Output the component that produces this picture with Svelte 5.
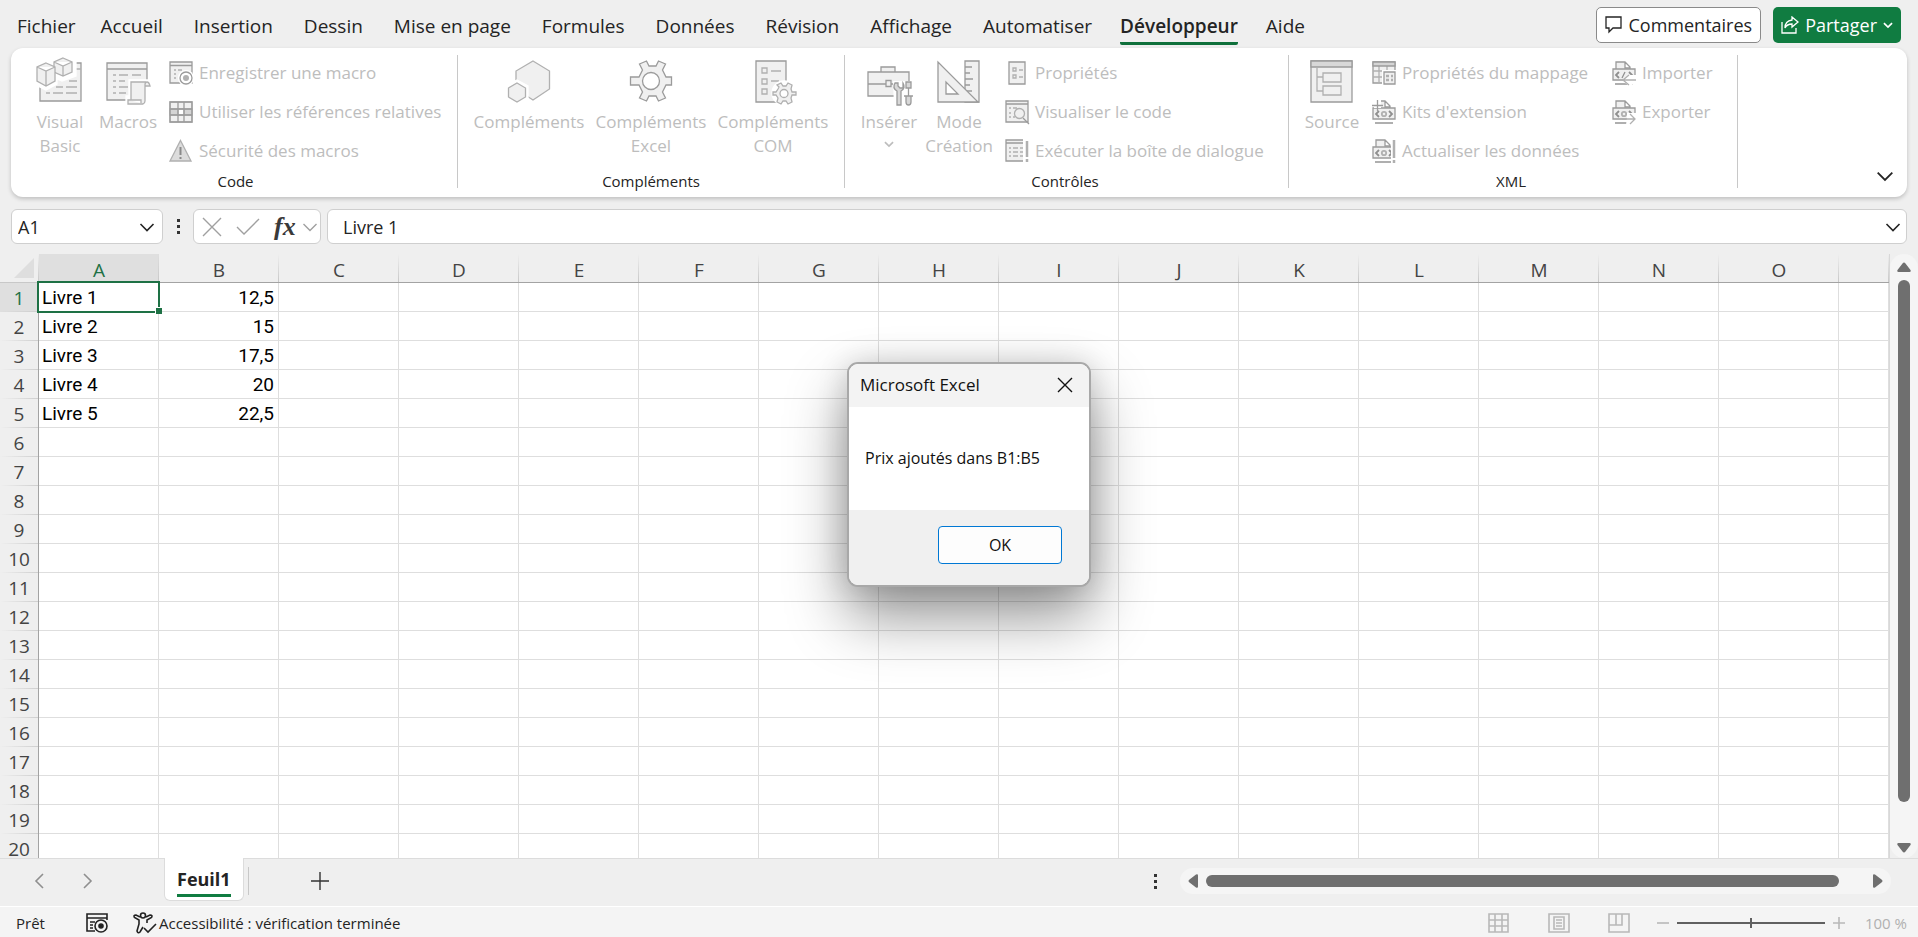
<script lang="ts">
  const tabs = ['Fichier', 'Accueil', 'Insertion', 'Dessin', 'Mise en page', 'Formules', 'Données', 'Révision', 'Affichage', 'Automatiser', 'Développeur', 'Aide'];
  const columns = 'ABCDEFGHIJKLMNO'.split('');
  const rows = Array.from({ length: 20 }, (_, i) => i + 1);
  const data: Record<number, string[]> = {
    1: ['Livre 1', '12,5'],
    2: ['Livre 2', '15'],
    3: ['Livre 3', '17,5'],
    4: ['Livre 4', '20'],
    5: ['Livre 5', '22,5'],
  };

  let activeTab = $state('Développeur');
  let cellName = $state('A1');
  let formula = $state('Livre 1');
  let zoom = $state(50);
  let showDialog = $state(true);
</script>

{#snippet chevron(size: number)}
  <svg width={size} height={size} viewBox="0 0 16 16" fill="none" stroke="currentColor" stroke-width={size < 12 ? 2.6 : 1.6}><path d="M1.500 5 8 11.500 14.500 5" /></svg>
{/snippet}

{#snippet icon(name: string)}
  {#if name === 'vb'}
    <svg class="big" viewBox="0 0 48 48">
      <path d="M4 5h41v38H4z" fill="#f0f0f0" stroke="#9b9b9b" />
      <path d="M30 11h15M33 23h8M20 29h7M30 29h11M10 35h4M17 35h10M30 35h11" />
      <path d="M0 5 10 1l8 3 8-5 14 5v14L26 23l-5-2v5L10 32 0 27z" fill="#fff" stroke="#fff" />
      <path d="m27 0 9 4v10l-9 4-9-4V4zM18 4l9 4 9-4M27 8v10" fill="#f0f0f0" />
      <path d="m10 5 9 4v14l-9 5-9-5V9zM1 9l9 4 9-4M10 13v15" fill="#f0f0f0" />
    </svg>
  {:else if name === 'macros'}
    <svg class="big" viewBox="0 0 48 48">
      <path d="M3 5h40v37H3z" fill="#f0f0f0" stroke="#9b9b9b" />
      <path d="M3 11h40" stroke="#9b9b9b" />
      <path d="M9 17h3M15 17h9M28 17h9M9 23h3M15 23h6M9 29h3M15 29h9M9 35h3M15 35h7" />
      <path d="M25 22h20q4 1 4 8h-4v16H22v-8h3z" fill="#fff" stroke="#fff" />
      <path d="M42 24h-15v18h-3v4h15q2-1 2-3V27q0-3 2-3t3 4h-5M24 42h13v3" fill="#f0f0f0" />
    </svg>
  {:else if name === 'hex'}
    <svg class="big" viewBox="0 0 48 48">
      <path d="m28 3 16.500 10v18L28 42 11 31V13z" fill="#f0f0f0" />
      <path d="m12 22 11 6v13l-11 6-11-6V28z" fill="#fff" stroke="#fff" />
      <path d="m12 25 8.500 5v9L12 44l-8.500-5v-9z" fill="#f0f0f0" />
    </svg>
  {:else if name === 'gear'}
    <svg class="big" viewBox="0 0 48 48">
      <path d="M17 10 14 4l7-3 2.500 5h7L33 1l7 3-3 6 3.500 7H46v8h-5.500L37 32l3 6-7 3-2.500-5h-7L21 41l-7-3 3-6-3.500-7H5v-8h8.500z" transform="translate(-1.500 2)" fill="#f0f0f0" stroke="#9b9b9b" />
      <circle cx="24" cy="23" r="8.500" fill="#fff" stroke="#9b9b9b" />
    </svg>
  {:else if name === 'com'}
    <svg class="big" viewBox="0 0 48 48">
      <path d="M7 3h30v41H7z" fill="#f0f0f0" stroke="#9b9b9b" />
      <path d="M13 10h5v5h-5zM13 21h5v5h-5zM13 31h5v5h-5zM22 13h10M22 23h8" />
      <circle cx="35" cy="35" r="12" fill="#fff" stroke="#fff" />
      <path d="m30 29-2-2 4-2 2 3h3l2-3 4 2-1 4 1 3h4v3h-4l-1 3 1 4-4 2-2-3h-3l-2 3-4-2 1-4-2-3h-3v-3h3l2-3z" fill="#f0f0f0" />
      <circle cx="35" cy="35.500" r="4" fill="#fff" />
    </svg>
  {:else if name === 'toolbox'}
    <svg class="big" viewBox="0 0 48 48">
      <path d="M16 14v-5h14v5M3 14h41v24H3z" fill="#f0f0f0" stroke="#9b9b9b" />
      <path d="M3 26h41" stroke="#9b9b9b" />
      <path d="M28 23h21v26H29z" fill="#fff" stroke="none" />
      <path d="M21 22.500h5v6h-5z" fill="#f0f0f0" stroke="#9b9b9b" />
      <path d="M30 25q-3 5 2 8v14h4V33q5-3 2-8v5h-3l-2-2v-3zM41 24h5v6h-5zM43.500 30v8M39 38h9M41 38v6q0 3 2.500 3t2.500-3v-6" fill="#d8d8d8" stroke="#9b9b9b" />
    </svg>
  {:else if name === 'design'}
    <svg class="big" viewBox="0 0 48 48">
      <path d="M30 3h14v41H30z" fill="#f0f0f0" stroke="#9b9b9b" />
      <path d="M30 9h7M30 15h5M30 21h8M30 27h5M30 33h7" stroke="#9b9b9b" />
      <path d="M3 4v40h40z" fill="#f0f0f0" stroke="#9b9b9b" />
      <path d="M11 24v12h12z" fill="#fff" stroke="#9b9b9b" />
    </svg>
  {:else if name === 'source'}
    <svg class="big" viewBox="0 0 48 48">
      <path d="M3 3h41v41H3z" fill="#f0f0f0" stroke="#9b9b9b" />
      <path d="M3 3h41v6H3z" fill="#d8d8d8" stroke="#9b9b9b" />
      <path d="M9 9v24h6M9 19h6M15 15h18v9H15zM15 28h18v9H15z" />
    </svg>
  {:else}
    <svg class="small" viewBox="0 0 24 24">
      {#if name === 'record'}
        <path d="M1 1h22v21H1zM1 4.500h22" fill="#f0f0f0" stroke="#9b9b9b" />
        <path d="M5 9h2M9 9h4M5 13h2M5 17h2" />
        <circle cx="17" cy="17" r="8" fill="#fff" stroke="none" />
        <circle cx="17" cy="17" r="6" fill="#fff" stroke="#9b9b9b" />
        <circle cx="17" cy="17" r="3" fill="#b0b0b0" stroke="none" />
      {:else if name === 'relative'}
        <path d="M1 2h22v20H1z" fill="#f0f0f0" />
        <path d="M1 9h22v6H1z" fill="#d4d4d4" />
        <path d="M9 9h6v6H9z" fill="#fff" />
        <path d="M1 2h22v20H1zM9 2v20M15 2v20M1 9h22M1 15h22" stroke="#9b9b9b" />
      {:else if name === 'warning'}
        <path d="M11.500 1.500 22 22H1z" fill="#dcdcdc" />
        <path d="M11.500 8v8M11.500 18v2" stroke="#8a8a8a" stroke-width="2" />
      {:else if name === 'props'}
        <path d="M4 1h16v22H4z" fill="#f0f0f0" stroke="#9b9b9b" />
        <path d="M8 7h3v3H8zM8 14h3v3H8zM14 9h4M14 16h4" />
      {:else if name === 'view'}
        <path d="M1 1h22v21H1zM1 4h22" fill="#f0f0f0" stroke="#9b9b9b" />
        <path d="M4 8h2M8 8h4M4 13h2M4 17h2M8 17h2" />
        <path d="m18 18 6 6" stroke="#9b9b9b" />
        <circle cx="14.500" cy="13.500" r="5" fill="#f0f0f0" />
      {:else if name === 'run'}
        <path d="M18 1H1v21h17M1 4h17" fill="#f0f0f0" stroke="#9b9b9b" />
        <path d="M4 9h2M8 9h5M15 9h3M4 13h2M8 13h5M15 13h3M4 17h2M8 17h5M15 17h3" />
        <path d="M22 2v16M22 20v3" stroke-width="2.500" />
      {:else if name === 'map'}
        <path d="M1 1h22v21H1z" fill="#f0f0f0" stroke="#9b9b9b" />
        <path d="M1 10h22M1 16h22M7 5v17M15 5v17" />
        <path d="M1 1h22v4H1z" fill="#d4d4d4" stroke="#9b9b9b" />
        <path d="M10 9h15v16H10z" fill="#fff" stroke="none" />
        <path d="M12 11h11v12H12z" fill="#f0f0f0" stroke="#9b9b9b" />
        <path d="M14 15h3M19 15h2M14 19h3M19 19h2" stroke-width="2.500" />
      {:else}
        <path d="M4 8V1h9l5 5v2M13 1v6h5" fill="#f0f0f0" stroke="#9b9b9b" />
        <path d="M1 8h22v11H1z" fill="#f0f0f0" stroke="#9b9b9b" />
        <path d="M3 23h18" stroke="#9b9b9b" stroke-width="1.600" />
        <path d="m7 11-3 3 3 3M17 11l3 3-3 3" stroke="#8f8f8f" stroke-width="1.800" />
        {#if name === 'import'}
          <path d="m13 11-3 6" stroke="#8f8f8f" />
          <path d="M11 20 17 14h8v8l-8 3z" fill="#fff" stroke="none" />
          <path d="M24 19H11m6-5-6 5 6 5" />
        {:else}
          <circle cx="12" cy="14" r="2.200" stroke-width="1.800" />
        {/if}
        {#if name === 'kits'}
          <path d="M2 0h7v8H2z" fill="#fff" stroke="none" />
          <path d="M5.500 0v11M0 5.500h11" stroke="#9b9b9b" />
        {:else if name === 'refresh'}
          <path d="M19 1h6v23h-6z" fill="#fff" stroke="none" />
          <path d="M22 1v18M22 21v3" stroke-width="2.500" />
        {:else if name === 'export'}
          <path d="M15 17v-4h10v12H14z" fill="#fff" stroke="none" />
          <path d="M10 19h13m-5-5 5 5-5 5" />
        {/if}
      {/if}
    </svg>
  {/if}
{/snippet}

{#snippet bigButton(name: string, label: string, second = '')}
  <button class="big-button" disabled>
    {@render icon(name)}
    <span>{label}</span>
    {#if second}<span>{second}</span>{/if}
    {#if name === 'toolbox'}<span class="drop">{@render chevron(10)}</span>{/if}
  </button>
{/snippet}

{#snippet smallButton(name: string, label: string)}
  <button class="small-button" disabled>{@render icon(name)}<span>{label}</span></button>
{/snippet}

<div class="excel">
  <header class="tab-bar">
    <nav>
      {#each tabs as tab}
        <button class="tab" class:active={tab === activeTab} onclick={() => (activeTab = tab)}><span>{tab}</span></button>
      {/each}
    </nav>
    <div class="actions">
      <button class="comments">
        <svg width="18" height="18" viewBox="0 0 18 18" fill="none" stroke="currentColor" stroke-width="1.300"><path d="M1 1h15v11H8l-4 4v-4H1z" /></svg>
        Commentaires
      </button>
      <button class="share">
        <svg width="18" height="18" viewBox="0 0 18 18" fill="none" stroke="currentColor" stroke-width="1.300"><path d="M1 6v11h14v-5M11 1l6 5-6 5V8Q6 8 4 12q0-7 7-8z" /></svg>
        Partager
        {@render chevron(10)}
      </button>
    </div>
  </header>

  <section class="ribbon">
    <div class="group code">
      <div class="tools">
        {@render bigButton('vb', 'Visual', 'Basic')}
        {@render bigButton('macros', 'Macros')}
        <div class="stack">
          {@render smallButton('record', 'Enregistrer une macro')}
          {@render smallButton('relative', 'Utiliser les références relatives')}
          {@render smallButton('warning', 'Sécurité des macros')}
        </div>
      </div>
      <div class="group-name">Code</div>
    </div>
    <div class="group addins">
      <div class="tools">
        {@render bigButton('hex', 'Compléments')}
        {@render bigButton('gear', 'Compléments', 'Excel')}
        {@render bigButton('com', 'Compléments', 'COM')}
      </div>
      <div class="group-name">Compléments</div>
    </div>
    <div class="group controls">
      <div class="tools">
        {@render bigButton('toolbox', 'Insérer')}
        {@render bigButton('design', 'Mode', 'Création')}
        <div class="stack">
          {@render smallButton('props', 'Propriétés')}
          {@render smallButton('view', 'Visualiser le code')}
          {@render smallButton('run', 'Exécuter la boîte de dialogue')}
        </div>
      </div>
      <div class="group-name">Contrôles</div>
    </div>
    <div class="group xml">
      <div class="tools">
        {@render bigButton('source', 'Source')}
        <div class="stack map">
          {@render smallButton('map', 'Propriétés du mappage')}
          {@render smallButton('kits', "Kits d'extension")}
          {@render smallButton('refresh', 'Actualiser les données')}
        </div>
        <div class="stack">
          {@render smallButton('import', 'Importer')}
          {@render smallButton('export', 'Exporter')}
        </div>
      </div>
      <div class="group-name">XML</div>
    </div>
    <button class="collapse" aria-label="Réduire le ruban">{@render chevron(18)}</button>
  </section>

  <section class="formula-bar">
    <div class="box name-box">
      <input aria-label="Zone Nom" bind:value={cellName} />
      <button aria-label="Liste des noms">{@render chevron(16)}</button>
    </div>
    <span class="dots"><i></i><i></i><i></i></span>
    <div class="box fx-box">
      <button aria-label="Annuler"><svg width="20" height="20" viewBox="0 0 20 20"><path d="m1 1 18 18M19 1 1 19" /></svg></button>
      <button aria-label="Entrer"><svg width="24" height="20" viewBox="0 0 24 20"><path d="m1 10 7 7L23 2" /></svg></button>
      <button class="fx">fx</button>
      <button aria-label="Fonctions récentes">{@render chevron(16)}</button>
    </div>
    <div class="box formula-box">
      <input aria-label="Barre de formule" bind:value={formula} />
      <button aria-label="Développer">{@render chevron(16)}</button>
    </div>
  </section>

  <main class="sheet">
    <div class="grid">
      <table>
        <colgroup>
          <col class="head-col" />
          {#each columns as _}<col class="data-col" />{/each}
          <col />
        </colgroup>
        <thead>
          <tr>
            <th class="corner"><svg width="20" height="20" viewBox="0 0 20 20"><path d="M20 0v20H0z" fill="#dedede" /></svg></th>
            {#each columns as column}
              <th class:selected={column === 'A'}>{column}</th>
            {/each}
            <th></th>
          </tr>
        </thead>
        <tbody>
          {#each rows as row}
            <tr>
              <th class:selected={row === 1}>{row}</th>
              {#each columns as _, i}
                <td class:cursor={row === 1 && i === 0} class:number={i === 1}>{data[row]?.[i] ?? ''}</td>
              {/each}
              <td></td>
            </tr>
          {/each}
        </tbody>
      </table>
    </div>
    <div class="v-scroll">
      <svg width="14" height="10" viewBox="0 0 14 10"><path d="M5.500 1.500q1.500-2 3 0L13.500 8q.8 2-1 2h-11q-1.800 0-1-2z" /></svg>
      <div class="v-thumb"></div>
      <svg width="14" height="10" viewBox="0 0 14 10"><path d="M5.500 8.500q1.500 2 3 0L13.500 2q.8-2-1-2h-11q-1.800 0-1 2z" /></svg>
    </div>
  </main>

  <section class="sheet-bar">
    <button class="prev" aria-label="Feuille précédente"><svg width="10" height="16" viewBox="0 0 10 16"><path d="M9 1 2 8l7 7" /></svg></button>
    <button class="next" aria-label="Feuille suivante"><svg width="10" height="16" viewBox="0 0 10 16"><path d="m1 1 7 7-7 7" /></svg></button>
    <button class="sheet-tab"><span>Feuil1</span></button>
    <button class="add" aria-label="Nouvelle feuille"><svg width="18" height="18" viewBox="0 0 18 18"><path d="M9 0v18M0 9h18" /></svg></button>
    <span class="dots"><i></i><i></i><i></i></span>
    <div class="h-scroll">
      <svg width="10" height="14" viewBox="0 0 10 14"><path d="M1.500 5.500q-2 1.500 0 3L8 13.500q2 .8 2-1v-11q0-1.800-2-1z" /></svg>
      <div class="h-thumb"></div>
      <svg width="10" height="14" viewBox="0 0 10 14"><path d="M8.500 5.500q2 1.500 0 3L2 13.500q-2 .8-2-1v-11q0-1.800 2-1z" /></svg>
    </div>
  </section>

  <footer class="status">
    <span class="ready">Prêt</span>
    <button aria-label="Enregistrer une macro">
      <svg width="22" height="20" viewBox="0 0 22 20"><path d="M9 18H1V1h20v6M1 5h20M4 9h5M4 12h3M4 15h3" /><circle cx="15" cy="13" r="6" /><circle class="dot" cx="15" cy="13" r="2" /></svg>
    </button>
    <button class="access">
      <svg width="24" height="22" viewBox="0 0 24 22"><circle cx="10" cy="3.500" r="2.500" /><path d="M7 5 3 3Q0 3 1.500 5.500L6 8v4l-2 7q1 3 3 1l3-5M13 5l4-2q3 0 1.500 2.500L14 8v3M11 16l4 4 8-8" /></svg>
      Accessibilité : vérification terminée
    </button>
    <div class="views">
      <button aria-label="Normal"><svg width="22" height="20" viewBox="0 0 22 20"><path d="M1 1h19v18H1zM7 1v18M14 1v18M1 7h19M1 13h19" /></svg></button>
      <button aria-label="Mise en page"><svg width="22" height="20" viewBox="0 0 22 20"><path d="M1 1h20v18H1zM6 4h10v12H6zM8 7h6M8 10h6M8 13h6" /></svg></button>
      <button aria-label="Avec sauts de page"><svg width="22" height="20" viewBox="0 0 22 20"><path d="M1 1h20v18H1zM8 1v11M14 1v11H1" /></svg></button>
    </div>
    <div class="zoom">
      <button aria-label="Zoom arrière"><svg width="12" height="12" viewBox="0 0 12 12"><path d="M0 6h12" /></svg></button>
      <input type="range" aria-label="Zoom" min="0" max="100" bind:value={zoom} />
      <button aria-label="Zoom avant"><svg width="12" height="12" viewBox="0 0 12 12"><path d="M0 6h12M6 0v12" /></svg></button>
      <span>100 %</span>
    </div>
  </footer>

  {#if showDialog}
    <div class="dialog" role="alertdialog" aria-labelledby="dialog-title">
      <div class="dialog-title">
        <span id="dialog-title">Microsoft Excel</span>
        <button aria-label="Fermer" onclick={() => (showDialog = false)}><svg width="16" height="16" viewBox="0 0 16 16" fill="none" stroke="currentColor" stroke-width="1.400"><path d="m1 1 14 14M15 1 1 15" /></svg></button>
      </div>
      <p>Prix ajoutés dans B1:B5</p>
      <div class="dialog-footer">
        <button onclick={() => (showDialog = false)}>OK</button>
      </div>
    </div>
  {/if}
</div>

<style>
  :global(body) {
    margin: 0;
  }
  .excel {
    position: relative;
    display: flex;
    flex-direction: column;
    height: 100vh;
    overflow: hidden;
    background: #efefef;
    color: #242424;
    font-family: "Open Sans", "Noto Sans", sans-serif;
    font-size: 16px;
  }
  button, input {
    font: inherit;
    color: inherit;
    background: none;
    border: none;
    padding: 0;
    margin: 0;
  }
  input {
    outline: none;
    min-width: 0;
  }
  svg {
    display: block;
    flex: none;
  }

  .tab-bar {
    display: flex;
    justify-content: space-between;
    align-items: center;
    height: 48px;
    flex: none;
    padding: 0 17px 0 2px;
  }
  nav {
    display: flex;
    gap: 1px;
  }
  .tab {
    padding: 4px 15px 0;
    font-size: 19px;
  }
  .tab:first-child {
    padding-right: 9px;
  }
  .tab span {
    display: block;
    height: 32px;
    padding-top: 2px;
    line-height: 32px;
    border-bottom: 3px solid transparent;
    border-radius: 2px;
  }
  .tab.active {
    padding: 4px 12px 0;
    font-weight: 600;
  }
  .tab.active span {
    border-color: #0f703b;
  }
  .actions {
    display: flex;
    gap: 12px;
    height: 36px;
    margin-top: 2px;
    font-size: 18px;
  }
  .comments, .share {
    display: flex;
    align-items: center;
    gap: 6px;
    padding: 0 8px;
    border-radius: 5px;
  }
  .comments {
    background: #fff;
    border: 1px solid #8a8a8a;
  }
  .share {
    background: #107c41;
    color: #fff;
  }

  .ribbon {
    display: flex;
    position: relative;
    flex: none;
    height: 149px;
    margin: 0 11px;
    background: #fff;
    border-radius: 12px;
    box-shadow: 0 2px 4px rgba(0, 0, 0, 0.2);
  }
  .group {
    display: flex;
    flex-direction: column;
    justify-content: space-between;
    box-sizing: border-box;
    height: 133px;
    margin-top: 7px;
    border-right: 1px solid #c8c8c8;
  }
  .code {
    width: 447px;
    padding-left: 15px;
  }
  .addins {
    width: 387px;
  }
  .controls {
    width: 444px;
    padding-left: 9px;
  }
  .xml {
    width: 449px;
    padding-left: 8px;
  }
  .addins .tools {
    justify-content: center;
  }
  .tools {
    display: flex;
    height: 116px;
  }
  .group-name {
    font-size: 15px;
    line-height: 20px;
    text-align: center;
    height: 17px;
    margin-top: -2px;
  }
  .code .group-name, .controls .group-name, .xml .group-name {
    margin-left: -12px;
  }
  .big-button {
    display: flex;
    flex-direction: column;
    align-items: center;
    width: 68px;
    color: #bdbdbd;
    font-size: 17px;
    line-height: 24px;
  }
  .addins .big-button {
    width: 122px;
  }
  .controls .big-button, .xml .big-button {
    width: 70px;
  }
  .big {
    width: 48px;
    height: 48px;
    margin: 3px 0 4px;
    overflow: visible;
    fill: none;
    stroke: #b0b0b0;
    stroke-width: 1.3;
  }
  .drop {
    padding-top: 5px;
  }
  .small {
    width: 24px;
    height: 24px;
    overflow: visible;
    fill: none;
    stroke: #b0b0b0;
    stroke-width: 1.3;
  }
  .stack {
    display: flex;
    flex-direction: column;
    margin-top: -2px;
    margin-left: 7px;
  }
  .controls .stack {
    margin-left: 11px;
  }
  .xml .stack {
    margin-left: 5px;
  }
  .xml .map {
    width: 235px;
  }
  .small-button {
    display: flex;
    align-items: center;
    gap: 6px;
    height: 39px;
    color: #bdbdbd;
    font-size: 17px;
    white-space: nowrap;
  }
  .collapse {
    position: absolute;
    right: 13px;
    bottom: 12px;
  }

  .formula-bar {
    display: flex;
    flex: none;
    height: 35px;
    margin: 12px 11px 10px;
  }
  .box {
    display: flex;
    align-items: center;
    box-sizing: border-box;
    background: #fff;
    border: 1px solid #cfcfcf;
    border-radius: 6px;
    font-size: 18px;
  }
  .box input {
    flex: 1;
  }
  .name-box {
    width: 152px;
    padding: 0 7px 0 6px;
  }
  .fx-box {
    width: 128px;
    padding: 0 2px 0 8px;
    color: #a0a0a0;
  }
  .fx-box path {
    fill: none;
    stroke: currentColor;
    stroke-width: 1.4;
  }
  .fx-box button + button {
    margin-left: 14px;
  }
  .fx-box .fx + button {
    margin-left: auto;
  }
  .fx {
    font-family: "Liberation Serif", serif;
    font-style: italic;
    font-weight: bold;
    font-size: 26px;
    line-height: 28px;
    color: #3a3a3a;
  }
  .formula-box {
    flex: 1;
    margin-left: 6px;
    padding: 0 5px 0 15px;
  }
  .dots {
    display: flex;
    flex-direction: column;
    align-items: center;
    justify-content: center;
    gap: 3px;
    width: 30px;
  }
  .dots i {
    width: 3px;
    height: 3px;
    background: #333;
  }

  .sheet {
    display: flex;
    flex: 1;
    min-height: 0;
  }
  .grid {
    flex: 1;
    overflow: hidden;
    border-right: 1px solid #d8d8d8;
  }
  table {
    table-layout: fixed;
    width: 100%;
    border-collapse: separate;
    border-spacing: 0;
  }
  .head-col {
    width: 39px;
  }
  .data-col {
    width: 120px;
  }
  th, td {
    box-sizing: border-box;
    height: 29px;
    padding: 0;
    line-height: 22px;
    font-size: 19px;
  }
  th {
    font-weight: 400;
    color: #444;
  }
  thead th {
    padding-top: 4px;
    background: linear-gradient(transparent, #c8c8c8) right / 1px 100% no-repeat;
    border-bottom: 1px solid #a3a3a3;
  }
  thead .corner {
    padding: 0 3px 0 14px;
    border-bottom-color: #c8c8c8;
  }
  tbody th {
    background: linear-gradient(to right, transparent, #cfcfcf) bottom / 100% 1px no-repeat;
    border-right: 1px solid #a3a3a3;
  }
  th.selected {
    background-color: #dfdfdf;
    color: #1e7145;
  }
  td {
    padding: 2px 4px 0 3px;
    background: #fff;
    color: #000;
    font-family: Roboto, "Open Sans", sans-serif;
    border-right: 1px solid #dedede;
    border-bottom: 1px solid #dedede;
  }
  td.number {
    text-align: right;
  }
  td.cursor {
    position: relative;
  }
  td.cursor::before {
    content: "";
    position: absolute;
    inset: -2px;
    border: 2px solid #1e7145;
  }
  td.cursor::after {
    content: "";
    position: absolute;
    right: -4px;
    bottom: -3px;
    width: 6px;
    height: 6px;
    background: #1e7145;
    border: solid #fff;
    border-width: 1px 0 0 1px;
  }
  .v-scroll {
    display: flex;
    flex-direction: column;
    align-items: center;
    justify-content: space-between;
    box-sizing: border-box;
    width: 28px;
    padding: 8px 0 5px;
    background: #f5f5f5;
    border-radius: 14px;
  }
  .v-scroll path, .h-scroll path {
    fill: #6f6f6f;
  }
  .v-thumb {
    flex: 1;
    width: 12px;
    margin: 8px 0 41px;
    border-radius: 6px;
    background: #6f6f6f;
  }

  .sheet-bar {
    display: flex;
    align-items: center;
    flex: none;
    height: 48px;
    box-sizing: border-box;
    padding: 0 27px 3px 0;
    border-top: 1px solid #dcdcdc;
  }
  .sheet-bar button path {
    fill: none;
    stroke: #8f8f8f;
    stroke-width: 1.6;
  }
  .prev {
    margin-left: 34px;
  }
  .next {
    margin: 0 71px 0 39px;
  }
  .sheet-tab {
    align-self: flex-start;
    height: 43px;
    margin-top: -1px;
    padding: 0 12px;
    background: #fff;
    border: solid #dcdcdc;
    border-width: 0 1px 1px;
    border-radius: 0 0 6px 6px;
    font-size: 18px;
    font-weight: 700;
  }
  .sheet-tab span {
    display: block;
    padding-top: 2px;
    line-height: 30px;
    border-bottom: 3px solid #107c41;
  }
  .add {
    margin-left: 4px;
    padding: 5px 0 5px 62px;
    border-left: 1px solid #c8c8c8;
  }
  .sheet-bar .add path {
    stroke: #333;
    stroke-width: 1.4;
  }
  .sheet-bar .dots {
    margin-left: auto;
    padding-right: 9px;
  }
  .h-scroll {
    display: flex;
    align-items: center;
    box-sizing: border-box;
    width: calc(40% - 45px);
    height: 26px;
    padding: 0 8px;
    border-radius: 13px;
    background: #f5f5f5;
  }
  .h-thumb {
    flex: 1;
    height: 12px;
    margin: 0 34px 0 8px;
    border-radius: 6px;
    background: #6f6f6f;
  }

  .status {
    display: flex;
    align-items: center;
    flex: none;
    height: 31px;
    box-sizing: border-box;
    padding: 1px 11px 0 16px;
    border-top: 1px solid #fff;
    background: #f4f4f4;
    font-size: 15px;
  }
  .status path, .status circle {
    fill: none;
    stroke: #222;
    stroke-width: 1.6;
  }
  .status .dot {
    fill: #222;
  }
  .ready {
    width: 70px;
  }
  .access {
    display: flex;
    align-items: center;
    gap: 2px;
    margin-left: 25px;
  }
  .views {
    display: flex;
    gap: 38px;
    margin-left: auto;
  }
  .status .views path, .status .zoom path {
    stroke: #b8b8b8;
  }
  .zoom {
    display: flex;
    align-items: center;
    gap: 8px;
    margin-left: 27px;
    color: #b0b0b0;
  }
  .zoom span {
    margin-left: 12px;
  }
  .zoom input {
    appearance: none;
    width: 148px;
    height: 10px;
    background: linear-gradient(#606060, #606060) center / 100% 2px no-repeat;
  }
  .zoom input::-webkit-slider-thumb {
    appearance: none;
    width: 2px;
    height: 10px;
    background: #606060;
  }

  .dialog {
    position: absolute;
    left: 847px;
    top: 362px;
    width: 240px;
    border: 2px solid #a8a8a8;
    border-radius: 11px;
    overflow: hidden;
    background: #fff;
    color: #111;
    box-shadow: 0 30px 60px rgba(0, 0, 0, 0.42), 0 0 30px rgba(0, 0, 0, 0.15);
  }
  .dialog-title {
    display: flex;
    align-items: center;
    justify-content: space-between;
    height: 41px;
    padding: 0 16px 2px 11px;
    background: #f3f3f3;
    font-size: 17px;
  }
  .dialog p {
    margin: 0;
    padding: 0 16px;
    line-height: 103px;
  }
  .dialog-footer {
    display: flex;
    justify-content: flex-end;
    padding: 16px 27px 21px;
    background: #f0f0f0;
  }
  .dialog-footer button {
    width: 124px;
    height: 38px;
    background: #fdfdfd;
    border: 1px solid #0078d4;
    border-radius: 4px;
  }
</style>
